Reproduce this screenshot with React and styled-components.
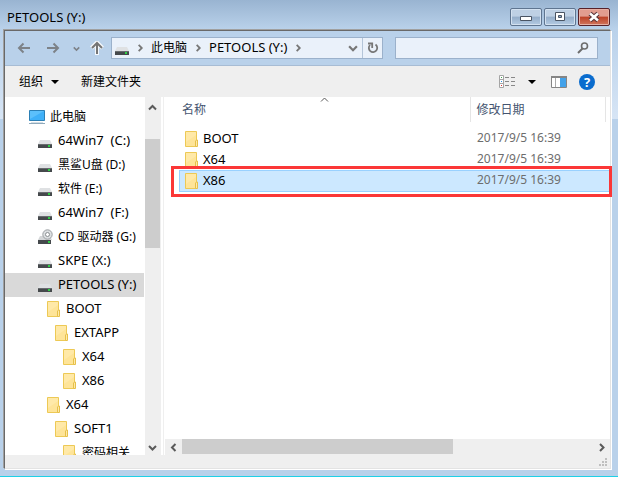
import React, { useState } from "react";
import styled, { createGlobalStyle, css } from "styled-components";

const drives = [
  { name: "此电脑", icon: "pc", depth: 0, cjk: true },
  { name: "64Win7  (C:)", icon: "drive", depth: 1 },
  { name: "黑鲨U盘 (D:)", icon: "drive", depth: 1, cjk: true },
  { name: "软件 (E:)", icon: "drive", depth: 1, cjk: true },
  { name: "64Win7  (F:)", icon: "drive", depth: 1 },
  { name: "CD 驱动器 (G:)", icon: "cd", depth: 1, cjk: true },
  { name: "SKPE (X:)", icon: "drive", depth: 1 },
  { name: "PETOOLS (Y:)", icon: "drive", depth: 1 },
  { name: "BOOT", icon: "folder", depth: 2 },
  { name: "EXTAPP", icon: "folder", depth: 3 },
  { name: "X64", icon: "folder", depth: 4 },
  { name: "X86", icon: "folder", depth: 4 },
  { name: "X64", icon: "folder", depth: 2 },
  { name: "SOFT1", icon: "folder", depth: 3 },
  { name: "密码相关", icon: "folder", depth: 4, cjk: true },
];

const files = [
  { name: "BOOT", date: "2017/9/5 16:39" },
  { name: "X64", date: "2017/9/5 16:39" },
  { name: "X86", date: "2017/9/5 16:39" },
];

const indents = [24, 33, 42, 50, 58];
const gaps = { pc: 5, drive: 6, cd: 5, folder: 5 };

function FolderIcon() {
  return (
    <svg width="14" height="16" viewBox="0 0 14 16" aria-hidden="true">
      <path d="M.5.5h11v15H.5z" fill="#fee498" stroke="#edc955" />
      <path d="M1 1h10v3L1 11z" fill="#ffe9a8" />
      <path d="M10.500 15.500V10l1-1h1v6.500z" fill="#ffe9a8" stroke="#e6c04a" />
    </svg>
  );
}

function DriveIcon() {
  return (
    <svg width="14" height="16" viewBox="0 0 14 16" aria-hidden="true">
      <path d="M2 7h10l2 4H0z" fill="#dfe1e3" />
      <path d="M0 11h14v4H0z" fill="#45494c" />
      <path d="M0 11h14v1H0z" fill="#686c6f" />
      <path d="M10 12h2v2h-2z" fill="#2fd045" />
    </svg>
  );
}

function CdIcon() {
  return (
    <svg width="15" height="16" viewBox="0 0 15 16" aria-hidden="true">
      <path d="M2 7h10l2 4H0z" fill="#d4d6d8" />
      <circle cx="9.500" cy="5.500" r="4.700" fill="#dcdfe1" stroke="#9da0a3" />
      <circle cx="9.500" cy="5.500" r="2" fill="#fff" stroke="#8b8f92" />
      <path d="M0 11h13v4H0z" fill="#45494c" />
      <path d="M10 12h2v2h-2z" fill="#2fd045" />
    </svg>
  );
}

function PcIcon() {
  return (
    <svg width="16" height="16" viewBox="0 0 16 16" aria-hidden="true">
      <path d="M.5 1.500h15v10H.5z" fill="#3fb0f8" stroke="#2b7fb5" />
      <path d="M1 2h14L1 10z" fill="#5cc0fb" />
      <path d="M2 13h12v1H2z" fill="#d3dde4" />
      <path d="M0 14h16v1H0z" fill="#8fa9bb" />
    </svg>
  );
}

const icons = { pc: PcIcon, drive: DriveIcon, cd: CdIcon, folder: FolderIcon };

function Chevron({ dir, size = 9, color = "#5a5a5a", weight = 2 }) {
  const paths = {
    up: "M1 6.500 4.500 3 8 6.500",
    down: "M1 3 4.500 6.500 8 3",
    left: "M6.500 1 3 4.500 6.500 8",
    right: "M3 1 6.500 4.500 3 8",
  };
  return (
    <svg width={size} height={size} viewBox="0 0 9 9" aria-hidden="true">
      <path d={paths[dir]} fill="none" stroke={color} strokeWidth={weight} />
    </svg>
  );
}

function Caret() {
  return (
    <svg width="8" height="4" viewBox="0 0 8 4" aria-hidden="true">
      <path d="M0 0h8L4 4z" fill="#000" />
    </svg>
  );
}

function TitleBar() {
  return (
    <Title>
      <TitleText>PETOOLS (Y:)</TitleText>
      <CaptionButton aria-label="Minimize">
        <svg width="12" height="12" viewBox="0 0 12 12">
          <path d="M.5 5.500h11v4H.5z" fill="#fff" stroke="#4a5463" />
        </svg>
      </CaptionButton>
      <CaptionButton aria-label="Maximize">
        <svg width="12" height="12" viewBox="0 0 12 12">
          <path d="M1.500 1.500h9v8h-9z" fill="#fff" stroke="#4a5463" />
          <path d="M4.500 4.500h3v2h-3z" fill="#8ea9c9" stroke="#4a5463" />
        </svg>
      </CaptionButton>
      <CaptionButton aria-label="Close" $close>
        <svg width="12" height="12" viewBox="0 0 12 12">
          <path d="M2 2.500 10 9.500M10 2.500 2 9.500" stroke="#553338" strokeWidth="4.500" />
          <path d="M2 2.500 10 9.500M10 2.500 2 9.500" stroke="#fff" strokeWidth="2.500" />
        </svg>
      </CaptionButton>
    </Title>
  );
}

function AddressBar() {
  return (
    <NavBar>
      <NavButton aria-label="Back">
        <svg width="14" height="12" viewBox="0 0 14 12">
          <path d="M13 6H2M6.500 1.500 2 6l4.500 4.500" fill="none" stroke="#7d8288" strokeWidth="2" />
        </svg>
      </NavButton>
      <NavButton aria-label="Forward" $gap={15}>
        <svg width="14" height="12" viewBox="0 0 14 12">
          <path d="M1 6h11M7.500 1.500 12 6l-4.500 4.500" fill="none" stroke="#7d8288" strokeWidth="2" />
        </svg>
      </NavButton>
      <NavButton aria-label="Recent" $gap={13}>
        <Chevron dir="down" size={7} color="#7d8288" />
      </NavButton>
      <NavButton aria-label="Up" $gap={10}>
        <svg width="14" height="14" viewBox="0 0 14 14">
          <path d="M7 14V2M1.500 7 7 1.500 12.500 7" fill="none" stroke="#f4f8fc" strokeWidth="4" />
          <path d="M7 13V2M2 7l5-5 5 5" fill="none" stroke="#757575" strokeWidth="2" />
        </svg>
      </NavButton>
      <Address>
        <DriveIcon />
        <Chevron dir="right" size={8} color="#777" />
        <Crumb href="#pc" $cjk>
          此电脑
        </Crumb>
        <Chevron dir="right" size={8} color="#777" />
        <Crumb href="#petools">PETOOLS (Y:)</Crumb>
        <Chevron dir="right" size={8} color="#777" />
        <AddressTail>
          <NavButton aria-label="Previous locations">
            <Chevron dir="down" size={10} color="#777" />
          </NavButton>
          <Refresh aria-label="Refresh">
            <svg width="12" height="12" viewBox="0 0 12 12">
              <path d="M8.500 2.500A4.200 4.200 0 1 1 3 3" fill="none" stroke="#777" strokeWidth="1.800" />
              <path d="M5.200 6V1.500H1" fill="none" stroke="#777" strokeWidth="1.800" />
            </svg>
          </Refresh>
        </AddressTail>
      </Address>
      <SearchBox>
        <SearchInput aria-label="Search" />
        <svg width="12" height="12" viewBox="0 0 12 12" aria-hidden="true">
          <circle cx="7.500" cy="4" r="3" fill="none" stroke="#6d6d6d" strokeWidth="1.600" />
          <path d="M5.500 6.500 1 11" stroke="#6d6d6d" strokeWidth="2" />
        </svg>
      </SearchBox>
    </NavBar>
  );
}

function ToolBar() {
  return (
    <Tools>
      <ToolButton $after={22}>
        组织 <Caret />
      </ToolButton>
      <ToolButton>新建文件夹</ToolButton>
      <Spacer />
      <ToolButton aria-label="View" $after={12}>
        <svg width="17" height="14" viewBox="0 0 17 14">
          <path d="M.5.5h4v12h-4zM.5 4.500h4M.5 8.500h4" fill="#fff" stroke="#a5a5a5" />
          <path d="M2 2h1v1H2z" fill="#3fa34d" />
          <path d="M2 6h1v1H2z" fill="#2b8fe0" />
          <path d="M2 10h1v1H2z" fill="#d33" />
          <path d="M6 2.500h4M12 2.500h4M6 6.500h4M12 6.500h4M6 10.500h4M12 10.500h4" stroke="#888" />
        </svg>
      </ToolButton>
      <ToolButton aria-label="More views" $after={15}>
        <Caret />
      </ToolButton>
      <ToolButton aria-label="Preview pane" $after={12}>
        <svg width="16" height="12" viewBox="0 0 16 12">
          <path d="M.5.5h15v11H.5z" fill="#fff" stroke="#858585" />
          <path d="M0 0h16v2H0z" fill="#858585" />
          <path d="M4.500 2v9" stroke="#aaa" />
          <path d="M9 2h6v9H9z" fill="#43a2ea" />
        </svg>
      </ToolButton>
      <HelpButton aria-label="Help">?</HelpButton>
    </Tools>
  );
}

export default function App() {
  const [folder, setFolder] = useState("PETOOLS (Y:)");
  const [selected, setSelected] = useState("X86");

  return (
    <Window>
      <GlobalStyle />
      <TitleBar />
      <Client>
        <AddressBar />
        <ToolBar />
        <Content>
          <Tree>
            {drives.map((item, i) => {
              const Icon = icons[item.icon];
              return (
                <TreeItem
                  key={i}
                  $indent={indents[item.depth]}
                  $gap={gaps[item.icon]}
                  $active={item.name === folder}
                  onClick={() => setFolder(item.name)}
                >
                  <Icon />
                  <Label $cjk={item.cjk}>{item.name}</Label>
                </TreeItem>
              );
            })}
          </Tree>
          <VerticalBar>
            <ScrollButton aria-label="Scroll up" $height={20}>
              <Chevron dir="up" />
            </ScrollButton>
            <VerticalTrack>
              <VerticalThumb />
            </VerticalTrack>
            <ScrollButton aria-label="Scroll down">
              <Chevron dir="down" />
            </ScrollButton>
          </VerticalBar>
          <Pane>
            <FileArea>
              <FileTable>
                <thead>
                  <tr>
                    <NameHead>
                      <HeadInner>
                        名称
                        <SortMark>
                          <Chevron dir="up" weight={1} />
                        </SortMark>
                      </HeadInner>
                    </NameHead>
                    <DateHead>修改日期</DateHead>
                    <EdgeHead />
                  </tr>
                </thead>
                <tbody>
                  {files.map((file) => (
                    <FileRow
                      key={file.name}
                      $selected={file.name === selected}
                      onClick={() => setSelected(file.name)}
                    >
                      <td>
                        <FileName>
                          <FolderIcon />
                          <Label>{file.name}</Label>
                        </FileName>
                      </td>
                      <DateCell>{file.date}</DateCell>
                      <td />
                    </FileRow>
                  ))}
                </tbody>
              </FileTable>
            </FileArea>
            <HorizontalBar>
              <ScrollButton aria-label="Scroll left" $width={17}>
                <Chevron dir="left" />
              </ScrollButton>
              <HorizontalTrack>
                <HorizontalThumb />
              </HorizontalTrack>
              <ScrollButton aria-label="Scroll right" $width={17}>
                <Chevron dir="right" />
              </ScrollButton>
            </HorizontalBar>
          </Pane>
        </Content>
        <StatusBar>
          <svg width="8" height="8" viewBox="0 0 8 8" aria-hidden="true">
            <path
              d="M6 0h2v2H6zM3 3h2v2H3zM6 3h2v2H6zM0 6h2v2H0zM3 6h2v2H3zM6 6h2v2H6z"
              fill="#bfbfbf"
            />
          </svg>
        </StatusBar>
      </Client>
    </Window>
  );
}

const GlobalStyle = createGlobalStyle`
  * {
    box-sizing: border-box;
  }

  body {
    margin: 0;
    font-family: "Noto Sans", "Noto Sans CJK SC", sans-serif;
    font-size: 13px;
    line-height: 20px;
    color: #000;
  }

  button {
    padding: 0;
    border: none;
    background: none;
    font: inherit;
    color: inherit;
  }

  svg {
    display: block;
    flex: none;
  }
`;

const Window = styled.div`
  display: flex;
  flex-direction: column;
  height: 100vh;
  padding: 0 7px 7px 4px;
  overflow: hidden;
  border-bottom: 1px solid #1fd0e6;
  background: linear-gradient(#99b4d1, #b9d1ea 29px, #d7e5f5 119px, #b9d1ea 119px);
`;

const Title = styled.header`
  display: flex;
  flex: none;
  gap: 2px;
  height: 30px;
  padding: 8px 1px 0 3px;
`;

const TitleText = styled.span`
  flex: 1;
  line-height: 18px;
`;

const CaptionButton = styled.button`
  display: flex;
  align-items: center;
  justify-content: center;
  width: 32px;
  height: 18px;
  border: 1px solid #5f7590;
  border-radius: 2px;
  box-shadow: inset 0 0 0 1px #d3e1f0;
  background: linear-gradient(#bed0e4 45%, #94adc9 50%, #b4cbe3);

  ${(props) =>
    props.$close &&
    css`
      border-color: #57222a;
      box-shadow: inset 0 0 0 1px #e6b0a4;
      background: linear-gradient(#e29c8f 45%, #bd4127 50%, #d0765d);
    `}
`;

const Client = styled.main`
  display: flex;
  flex: 1;
  flex-direction: column;
  min-height: 0;
  border: 1px solid #e3e3e3;
  border-top-color: #696969;
  border-left-color: #696969;
  box-shadow: -1px -1px 0 #a0a0a0, 1px 1px 0 #fff;
  background: #efefef;
`;

const NavBar = styled.nav`
  display: flex;
  flex: none;
  align-items: center;
  height: 35px;
  padding: 0 12px;
  border-bottom: 1px solid #a7bcd4;
  background: #b9d1ea;
`;

const NavButton = styled.button`
  display: flex;
  margin-left: ${(props) => props.$gap || 0}px;
`;

const Address = styled.div`
  display: flex;
  flex: 268;
  align-items: center;
  gap: 7px;
  height: 22px;
  margin-left: 7px;
  padding-left: 3px;
  border: 1px solid #9bb1cb;
  background: #eaf1fa;
`;

const Label = styled.span`
  padding-bottom: ${(props) => (props.$cjk ? 0 : 2)}px;
  font-size: ${(props) => (props.$cjk ? 12 : 13)}px;
  line-height: 18px;
`;

const Crumb = styled(Label).attrs({ as: "a" })`
  color: #000;
  text-decoration: none;
`;

const AddressTail = styled.div`
  display: flex;
  flex: 1;
  align-items: center;
  align-self: stretch;
  justify-content: flex-end;
  gap: 4px;
`;

const Spacer = styled.div`
  flex: 1;
`;

const Refresh = styled.button`
  display: flex;
  align-items: center;
  justify-content: center;
  align-self: stretch;
  width: 20px;
  border-left: 1px solid #b4c5d9;
`;

const SearchBox = styled.div`
  display: flex;
  flex: 192;
  align-items: center;
  height: 22px;
  margin-left: 12px;
  padding-right: 8px;
  border: 1px solid #9bb1cb;
  background: #eaf1fa;
`;

const SearchInput = styled.input`
  flex: 1;
  min-width: 0;
  border: none;
  outline: none;
  background: none;
`;

const Tools = styled.div`
  display: flex;
  flex: none;
  align-items: center;
  height: 31px;
  padding: 0 15px 0 14px;
  font-size: 12px;
`;

const ToolButton = styled.button`
  display: flex;
  align-items: center;
  gap: 8px;
  margin-right: ${(props) => props.$after || 0}px;
`;

const HelpButton = styled.button`
  width: 16px;
  height: 16px;
  border-radius: 50%;
  background: #0a6cce;
  color: #fff;
  font-size: 13px;
  font-weight: bold;
  line-height: 16px;
`;

const Content = styled.div`
  display: flex;
  flex: 1;
  min-height: 0;
  background: #fff;
`;

const Tree = styled.aside`
  flex: none;
  width: 140px;
  padding: 8px 1px 0 0;
  overflow: hidden;
`;

const TreeItem = styled.button`
  display: flex;
  align-items: center;
  gap: ${(props) => props.$gap}px;
  width: 100%;
  height: 24px;
  padding-left: ${(props) => props.$indent}px;
  background: ${(props) => (props.$active ? "#d9d9d9" : "none")};
  white-space: pre;
`;

const VerticalBar = styled.div`
  display: flex;
  flex: none;
  flex-direction: column;
  width: 16px;
  background: #efefef;
`;

const ScrollButton = styled.button`
  display: flex;
  flex: none;
  align-items: center;
  justify-content: center;
  width: ${(props) => props.$width || 15}px;
  height: ${(props) => props.$height || 16}px;
`;

const VerticalTrack = styled.div`
  flex: 1;
  padding: 22px 1px 0 0;
`;

const VerticalThumb = styled.div`
  height: 109px;
  background: #cdcdcd;
`;

const Pane = styled.section`
  display: flex;
  flex: 1;
  flex-direction: column;
  min-width: 0;
  margin-left: 2px;
  border-left: 1px solid #efefef;
`;

const FileArea = styled.div`
  flex: 1;
  padding-left: 15px;
`;

const FileTable = styled.table`
  width: 100%;
  border-collapse: collapse;
  table-layout: fixed;

  th,
  td {
    padding: 0;
    font-weight: normal;
    text-align: left;
  }

  tbody::before {
    content: "";
    display: block;
    height: 6px;
  }
`;

const NameHead = styled.th`
  height: 25px;
  color: #44546f;
  font-size: 12px;
`;

const HeadInner = styled.div`
  position: relative;
  padding-left: 3px;
`;

const SortMark = styled.span`
  display: flex;
  position: absolute;
  top: -5px;
  right: 0;
  left: 0;
  justify-content: center;
`;

const DateHead = styled.th`
  width: 135px;
  border: 1px solid #e5e5e5;
  border-width: 0 1px;
  color: #44546f;
  font-size: 12px;

  &&& {
    padding-left: 6px;
  }
`;

const EdgeHead = styled.th`
  width: 5px;
`;

const FileRow = styled.tr`
  position: relative;
  height: 21px;

  ${(props) =>
    props.$selected &&
    css`
      height: 22px;
      outline: 1px solid #99d1ff;
      outline-offset: -1px;
      background: #cce8ff;

      td:first-child::after {
        content: "";
        position: absolute;
        inset: -4px -2px -5px -8px;
        border: 3px solid #fb3737;
        pointer-events: none;
      }
    `}
`;

const FileName = styled.div`
  display: flex;
  align-items: center;
  gap: 4px;
  padding-left: 6px;
`;

const DateCell = styled.td`
  color: #6d6d6d;
  font-size: 12px;
  line-height: 18px;

  &&& {
    padding: 0 0 2px 7px;
  }
`;

const HorizontalBar = styled.div`
  display: flex;
  flex: none;
  height: 16px;
  margin-left: 1px;
  background: #efefef;
`;

const HorizontalTrack = styled.div`
  flex: 1;
`;

const HorizontalThumb = styled.div`
  width: 66%;
  height: 15px;
  background: #cdcdcd;
`;

const StatusBar = styled.footer`
  display: flex;
  flex: none;
  align-items: flex-end;
  justify-content: flex-end;
  height: 13px;
  padding: 2px 3px;
`;
